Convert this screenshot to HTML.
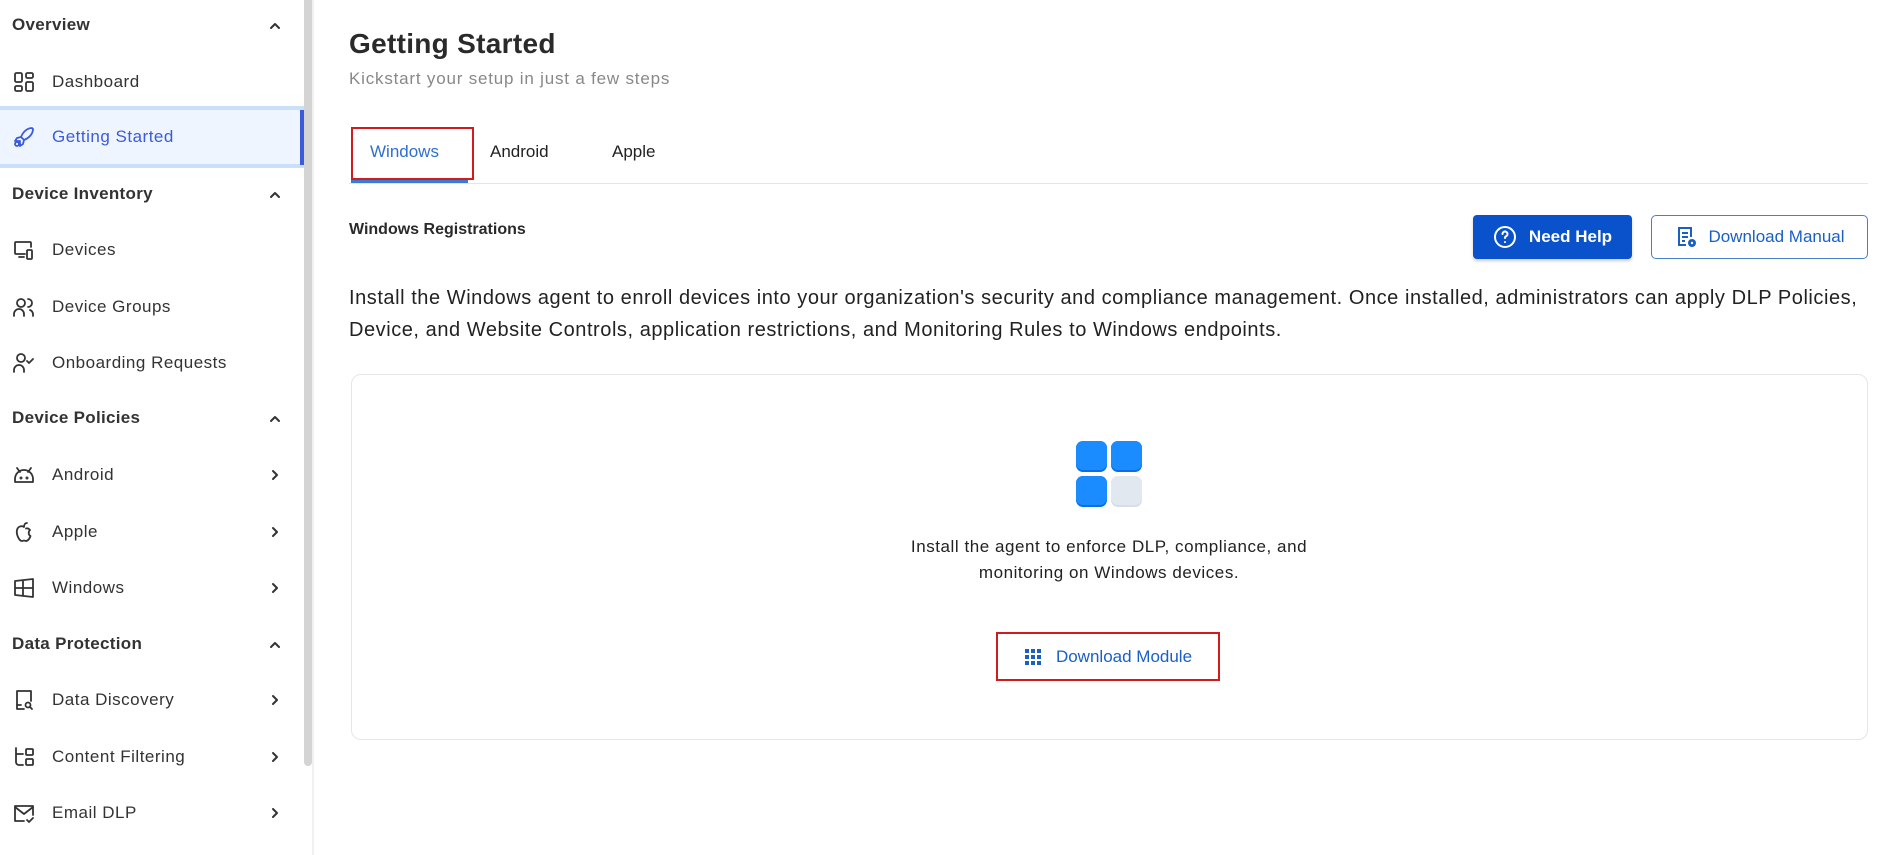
<!DOCTYPE html>
<html><head><meta charset="utf-8"><style>
*{box-sizing:border-box;margin:0;padding:0}
body{width:1902px;height:855px;overflow:hidden;background:#fff;font-family:"Liberation Sans",sans-serif;color:#222;position:relative}
.sb{position:absolute;left:0;top:0;width:304px;height:855px;background:#fff}
.sbar{position:absolute;left:304px;top:0;width:8px;height:766px;background:#d4d4d4;border-radius:0 0 4px 4px}
.sline{position:absolute;left:312px;top:0;width:2px;height:855px;background:#f0f0f0}
.h{position:absolute;left:12px;font-size:17px;font-weight:bold;color:#333;letter-spacing:.3px}
.it{position:absolute;left:12px;font-size:17px;color:#333;display:flex;align-items:center;letter-spacing:.5px}
.it svg{width:24px;height:24px;margin-right:16px;fill:none;stroke:#333;stroke-width:1.8;stroke-linecap:round;stroke-linejoin:round}
.chev{position:absolute;left:268px;width:14px;height:14px;fill:none;stroke:#333;stroke-width:2;stroke-linecap:round;stroke-linejoin:round}
.act{position:absolute;left:0;top:106px;width:304px;height:62px;background:#eef5fe;border-top:4px solid #c9dffa;border-bottom:4px solid #c9dffa}
.actbar{position:absolute;left:300px;top:110px;width:4px;height:55px;background:#3b5bdb}
.m{position:absolute}
.btn1{position:absolute;left:1473px;top:215px;width:159px;height:44px;background:#0a52cc;border-radius:4px;color:#fff;font-size:17px;font-weight:bold;display:flex;align-items:center;justify-content:center;box-shadow:0 2px 3px rgba(0,0,0,.2)}
.btn2{position:absolute;left:1651px;top:215px;width:217px;height:44px;border:1.5px solid #4a7fd0;border-radius:5px;color:#1a5fc8;font-size:17px;display:flex;align-items:center;justify-content:center}
</style></head><body>
<div class="sb">
<div class="act"></div><div class="actbar"></div>
<div class="h" style="top:15px">Overview</div>
<svg class="chev" style="top:19px" viewBox="0 0 14 14"><path d="M3 9l4-4 4 4"/></svg>
<div class="it" style="top:70px"><svg viewBox="0 0 24 24"><rect x="3" y="3" width="7" height="9" rx="1.5"/><rect x="14" y="3" width="7" height="5" rx="1.5"/><rect x="3" y="16" width="7" height="5" rx="1.5"/><rect x="14" y="12" width="7" height="9" rx="1.5"/></svg>Dashboard</div>
<div class="it" style="top:125px;color:#3b5bdb"><svg viewBox="0 0 24 24" style="stroke:#3b5bdb"><path d="M20 3c-5 0-9 4-11 9l3 3c5-2 9-6 9-11z"/><path d="M9 12l-4 1-2 3 5 0M12 15l-1 4-3 2 0-5"/><circle cx="5" cy="19" r="2"/></svg>Getting Started</div>
<div class="h" style="top:184px">Device Inventory</div>
<svg class="chev" style="top:188px" viewBox="0 0 14 14"><path d="M3 9l4-4 4 4"/></svg>
<div class="it" style="top:238px"><svg viewBox="0 0 24 24"><path d="M13 16H4a1 1 0 0 1-1-1V5a1 1 0 0 1 1-1h14a1 1 0 0 1 1 1v4"/><path d="M7 19h5"/><rect x="15" y="12" width="5" height="9" rx="1"/></svg>Devices</div>
<div class="it" style="top:295px"><svg viewBox="0 0 24 24"><circle cx="9" cy="8" r="4"/><path d="M2 21v-2a5 5 0 0 1 10 0v2M16 4a4 4 0 0 1 0 8M18 15a5 5 0 0 1 3 4v2"/></svg>Device Groups</div>
<div class="it" style="top:351px"><svg viewBox="0 0 24 24"><circle cx="9" cy="7" r="4"/><path d="M2 21v-2a5 5 0 0 1 10 0v2M15 10l2 2 4-4"/></svg>Onboarding Requests</div>
<div class="h" style="top:408px">Device Policies</div>
<svg class="chev" style="top:412px" viewBox="0 0 14 14"><path d="M3 9l4-4 4 4"/></svg>
<div class="it" style="top:463px"><svg viewBox="0 0 24 24"><path d="M3 19v-3a9 9 0 0 1 18 0v3zM5 5l3 4M19 5l-3 4"/><circle cx="9" cy="15" r=".6"/><circle cx="15" cy="15" r=".6"/></svg>Android</div>
<svg class="chev" style="top:468px" viewBox="0 0 14 14"><path d="M5 3l4 4-4 4"/></svg>
<div class="it" style="top:520px"><svg viewBox="0 0 24 24"><path d="M12 7c-2-1.5-6-1-7 3-1 4 2 11 5 11 1 0 1.5-.5 2-.5s1 .5 2 .5c2 0 4-3 4.5-5-2-1-2.5-4-.5-6-1-1.5-3-2-4-1.5M12 7c0-2 1-4 3-4"/></svg>Apple</div>
<svg class="chev" style="top:525px" viewBox="0 0 14 14"><path d="M5 3l4 4-4 4"/></svg>
<div class="it" style="top:576px"><svg viewBox="0 0 24 24"><path d="M3 5l18-2v18L3 19zM3 12h18M11 4v16"/></svg>Windows</div>
<svg class="chev" style="top:581px" viewBox="0 0 14 14"><path d="M5 3l4 4-4 4"/></svg>
<div class="h" style="top:634px">Data Protection</div>
<svg class="chev" style="top:638px" viewBox="0 0 14 14"><path d="M3 9l4-4 4 4"/></svg>
<div class="it" style="top:688px"><svg viewBox="0 0 24 24"><path d="M12 21H5V3h14v10"/><circle cx="16" cy="17" r="2.5"/><path d="M18 19l2 2M5 17h4"/></svg>Data Discovery</div>
<svg class="chev" style="top:693px" viewBox="0 0 14 14"><path d="M5 3l4 4-4 4"/></svg>
<div class="it" style="top:745px"><svg viewBox="0 0 24 24"><path d="M4 3v14a3 3 0 0 0 3 3h4M4 9h7"/><rect x="14" y="4" width="7" height="6" rx="1"/><rect x="14" y="14" width="7" height="6" rx="1"/></svg>Content Filtering</div>
<svg class="chev" style="top:750px" viewBox="0 0 14 14"><path d="M5 3l4 4-4 4"/></svg>
<div class="it" style="top:801px"><svg viewBox="0 0 24 24"><path d="M12 20H3V5h18v9"/><path d="M3 6l9 7 9-7M15 19l2 2 4-4"/></svg>Email DLP</div>
<svg class="chev" style="top:806px" viewBox="0 0 14 14"><path d="M5 3l4 4-4 4"/></svg>
</div>
<div class="sbar"></div><div class="sline"></div>

<div class="m" style="left:349px;top:28px;font-size:28px;font-weight:bold;color:#2a2a2a;letter-spacing:.3px">Getting Started</div>
<div class="m" style="left:349px;top:69px;font-size:17px;color:#888;letter-spacing:.8px">Kickstart your setup in just a few steps</div>
<div class="m" style="left:349px;top:183px;width:1519px;height:1px;background:#e5e5e5"></div>
<div class="m" style="left:351px;top:180px;width:117px;height:3px;background:#3a7bd5"></div>
<div class="m" style="left:351px;top:127px;width:123px;height:53px;border:2px solid #d01c1c"></div>
<div class="m" style="left:370px;top:142px;font-size:17px;color:#2e6fd0">Windows</div>
<div class="m" style="left:490px;top:142px;font-size:17px;color:#222">Android</div>
<div class="m" style="left:612px;top:142px;font-size:17px;color:#222">Apple</div>
<div class="m" style="left:349px;top:221px;font-size:16px;font-weight:bold;color:#2a2a2a">Windows Registrations</div>
<div class="btn1"><svg width="24" height="24" viewBox="0 0 24 24" fill="none" stroke="#fff" stroke-width="2" stroke-linecap="round" style="margin-right:12px"><circle cx="12" cy="12" r="10"/><path d="M9.5 9a2.5 2.5 0 1 1 3.5 2.3c-.7.4-1 1-1 1.7M12 17v.1"/></svg>Need Help</div>
<div class="btn2"><svg width="24" height="24" viewBox="0 0 24 24" fill="none" stroke="#1a5fc8" stroke-width="2" style="margin-right:10px"><path d="M12 20H5V3h12v9M8 8h6M8 12h6M8 16h3"/><circle cx="18" cy="18" r="4" fill="#1a5fc8" stroke="none"/><circle cx="18" cy="18" r="1.2" fill="#fff" stroke="none"/></svg>Download Manual</div>
<div class="m" style="left:349px;top:282px;width:1520px;font-size:20px;line-height:32px;color:#222;letter-spacing:.55px">Install the Windows agent to enroll devices into your organization's security and compliance management. Once installed, administrators can apply DLP Policies, Device, and Website Controls, application restrictions, and Monitoring Rules to Windows endpoints.</div>
<div class="m" style="left:351px;top:374px;width:1517px;height:366px;border:1px solid #e6e6e6;border-radius:10px"></div>
<svg class="m" style="left:1076px;top:441px" width="66" height="66" viewBox="0 0 66 66"><rect x="0" y="0" width="31" height="31" rx="7" fill="#0a6fe0"/><rect x="0" y="0" width="31" height="29" rx="7" fill="#1a8cff"/><rect x="35" y="0" width="31" height="31" rx="7" fill="#0a6fe0"/><rect x="35" y="0" width="31" height="29" rx="7" fill="#1a8cff"/><rect x="0" y="35" width="31" height="31" rx="7" fill="#0a6fe0"/><rect x="0" y="35" width="31" height="29" rx="7" fill="#1a8cff"/><rect x="35" y="35" width="31" height="31" rx="7" fill="#d6dde8"/><rect x="35" y="35" width="31" height="29" rx="7" fill="#e2e8f0"/></svg>
<div class="m" style="left:889px;top:534px;width:440px;text-align:center;font-size:17px;line-height:26px;color:#222;letter-spacing:.55px">Install the agent to enforce DLP, compliance, and monitoring on Windows devices.</div>
<div class="m" style="left:996px;top:632px;width:224px;height:49px;border:2px solid #d01c1c;display:flex;align-items:center;justify-content:center;color:#1a5fc8;font-size:17px">
<svg width="18" height="18" viewBox="0 0 18 18" fill="#1a5fc8" style="margin-right:14px"><rect x="1" y="1" width="4" height="4"/><rect x="7" y="1" width="4" height="4"/><rect x="13" y="1" width="4" height="4"/><rect x="1" y="7" width="4" height="4"/><rect x="7" y="7" width="4" height="4"/><rect x="13" y="7" width="4" height="4"/><rect x="1" y="13" width="4" height="4"/><rect x="7" y="13" width="4" height="4"/><rect x="13" y="13" width="4" height="4"/></svg>Download Module</div>
</body></html>
